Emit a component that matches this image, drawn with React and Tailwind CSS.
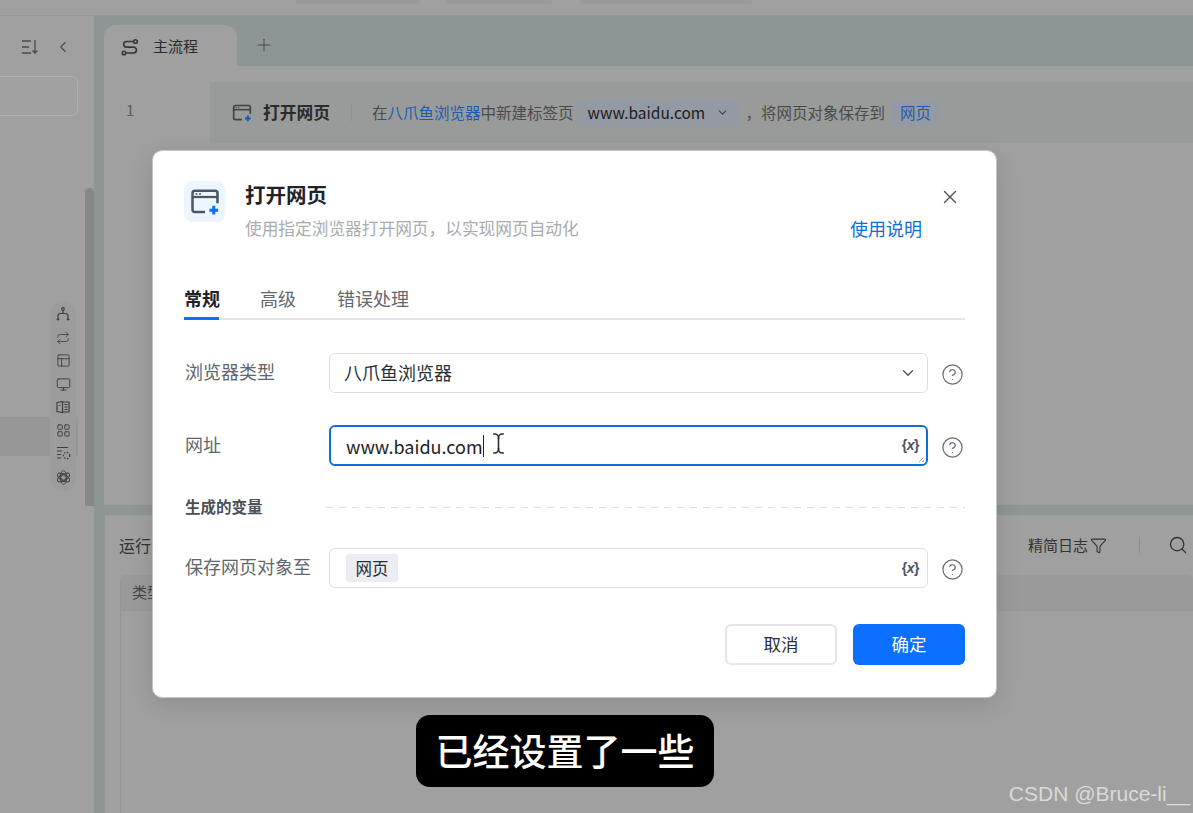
import React from 'react';
import { ChevronDown, ChevronLeft, CircleHelp, Funnel, LayoutGrid, Monitor, PanelsTopLeft, Plus, Repeat, Search, TextCursor, X } from 'lucide-react';

const font = { fontFamily: '"Noto Sans CJK SC", "Noto Sans", sans-serif' };

const BrowserPlus = ({ size = 22, plus = '#0b6fff', line = '#4b5563' }) => (
  <svg width={size} height={size} viewBox="0 0 24 24" fill="none">
    <path d="M12 20H4a2 2 0 0 1-2-2V5a2 2 0 0 1 2-2h16a2 2 0 0 1 2 2v8" stroke={line} strokeWidth="2" />
    <path d="M2 8h20" stroke={line} strokeWidth="1.8" />
    <circle cx="5.2" cy="5.6" r=".8" fill={line} />
    <circle cx="8" cy="5.6" r=".8" fill={line} />
    <path d="M19 15v7M15.5 18.500h7" stroke={plus} strokeWidth="2.400" />
  </svg>
);

const FlowIcon = () => (
  <svg width="18" height="18" viewBox="0 0 18 18" fill="none" stroke="#333636" strokeWidth="1.600">
    <circle cx="14.500" cy="3.500" r="1.800" />
    <circle cx="3" cy="15" r="1.800" />
    <path d="M12.500 3.500H5.500a2.800 2.800 0 0 0 0 5.600h7a2.800 2.800 0 0 1 0 5.900H5" />
  </svg>
);

const SortIcon = () => (
  <svg width="18" height="16" viewBox="0 0 18 16" fill="none" stroke="#4a4a4a" strokeWidth="1.300">
    <path d="M1 2h9M1 8h7M1 14h9M14 1v13M11.500 11.500 14 14l2.500-2.500" />
  </svg>
);

const BranchIcon = () => (
  <svg width="14" height="15" viewBox="0 0 14 15" fill="none" stroke="#3d3d3d" strokeWidth="1.200">
    <circle cx="7" cy="2" r="1.300" />
    <path d="M7 3.500v3M2 13V9a2.500 2.500 0 0 1 2.500-2.500h5A2.500 2.500 0 0 1 12 9v4M.8 11.800 2 13l1.200-1.200M10.800 11.800 12 13l1.200-1.200" />
  </svg>
);

const BookIcon = () => (
  <svg width="14" height="14" viewBox="0 0 14 14" fill="none" stroke="#3d3d3d" strokeWidth="1.200">
    <path d="M1 2.500 6.500 1.500v11L1 11.500zM6.500 2H13v10H6.500" />
    <path d="M8.500 4.500h3M8.500 7h3M8.500 9.500h3M3 5.500h1.500" />
  </svg>
);

const TaskIcon = () => (
  <svg width="15" height="15" viewBox="0 0 15 15" fill="none" stroke="#3d3d3d" strokeWidth="1.200">
    <path d="M1 1.500h11M1 5h5M1 8.500h4M1 12h4" />
    <circle cx="10.500" cy="9.500" r="3.200" strokeDasharray="1.600 1.400" />
  </svg>
);

const KnotIcon = () => (
  <svg width="15" height="15" viewBox="0 0 15 15" fill="none" stroke="#3d3d3d" strokeWidth=".9">
    <ellipse cx="7.500" cy="7.500" rx="6.800" ry="3.300" transform="rotate(30 7.500 7.500)" />
    <ellipse cx="7.500" cy="7.500" rx="6.800" ry="3.300" transform="rotate(90 7.500 7.500)" />
    <ellipse cx="7.500" cy="7.500" rx="6.800" ry="3.300" transform="rotate(150 7.500 7.500)" />
    <circle cx="7.500" cy="7.500" r="2.600" />
  </svg>
);

const VarMark = () => (
  <span className="text-[14px] font-bold tracking-[-0.5px] text-[#4b5563]" style={{ fontFamily: '"Liberation Sans", sans-serif' }}>
    {'{'}<span className="italic">x</span>{'}'}
  </span>
);

const Help = () => <CircleHelp size={23} strokeWidth={1.300} className="ml-[13px] mr-px mt-[3px] shrink-0 text-[#6b6f76]" />;

const Sidebar = () => (
  <div className="relative flex w-[94px] shrink-0 flex-col border-t border-[#979797]">
    <div className="flex h-[60px] items-center justify-end gap-[15px] pr-[22px] pt-[2px]">
      <SortIcon />
      <ChevronLeft size={18} strokeWidth={1.500} className="text-[#4a4a4a]" />
    </div>
    <div className="h-[40px] w-[78px] rounded-r-md border border-l-0 border-[#aeaeae]" />
    <div className="mt-[301px] h-[39px] w-[78px] bg-[#969696]" />
    <div className="absolute right-0 top-[172px] h-[318px] w-[9px] rounded-t-md bg-[#878787]" />
    {/* floating tool strip */}
    <div className="absolute left-[50px] top-[285px] flex h-[190px] w-[26px] flex-col items-center justify-between rounded-full bg-[#9c9c9c] py-[6px]">
      <BranchIcon />
      <Repeat size={14} strokeWidth={1.400} className="text-[#3d3d3d]" />
      <PanelsTopLeft size={15} strokeWidth={1.400} className="text-[#3d3d3d]" />
      <Monitor size={15} strokeWidth={1.500} className="text-[#3d3d3d]" />
      <BookIcon />
      <LayoutGrid size={15} strokeWidth={1.500} className="text-[#3d3d3d]" />
      <TaskIcon />
      <KnotIcon />
    </div>
  </div>
);

const FlowPane = () => (
  <div className="flex h-[490px] shrink-0 flex-col">
    <div className="flex h-[51px] shrink-0 items-end">
      <div className="flex h-[41px] w-[133px] items-center gap-[14px] rounded-t-[12px] bg-[#a0a0a0] pl-[17px] pt-[2px] text-[15px] text-[#2b2b2b]">
        <FlowIcon />
        <span>主流程</span>
      </div>
      <Plus size={20} strokeWidth={1.300} className="mb-[11px] ml-[17px] text-[#484c4c]" />
    </div>
    <div className="flex-1 bg-[#a0a0a0] pt-[16px]">
      <div className="flex">
        <div className="w-[106px] pl-[22px] pt-[17px] text-[15px] text-[#5c5c5c]">1</div>
        <div className="flex h-[61px] flex-1 items-center bg-[#999b9b] pl-[22px] text-[15.500px] text-[#4a4a4a]">
          <BrowserPlus size={20} plus="#1559b8" line="#3f4242" />
          <span className="ml-[11px] text-[16.750px] font-bold text-[#2b2b2b]">打开网页</span>
          <span className="ml-[21px] mr-[20px] h-[18px] w-px bg-[#929494]" />
          <span>在</span>
          <span className="text-[#1f5cb0]">八爪鱼浏览器</span>
          <span>中新建标签页</span>
          <span className="ml-[3px] flex h-[26px] w-[163px] items-center rounded bg-[#939aa3] pl-[11px] text-[#1c1c1c]">
            www.baidu.com
            <ChevronDown size={13} className="ml-[11px] text-[#444]" />
          </span>
          <span className="ml-[6px]">，将网页对象保存到</span>
          <span className="ml-[6px] flex h-[26px] items-center rounded bg-[#939aa3] px-[9px] text-[#1f5cb0]">网页</span>
        </div>
      </div>
    </div>
  </div>
);

const LogPane = () => (
  <div className="mt-[10px] flex flex-1 flex-col border-l border-[#959595] bg-[#a0a0a0]">
    <div className="flex h-[60px] shrink-0 items-center pl-[14px] text-[16px] text-[#333]">
      <span>运行日志</span>
      <span className="ml-auto text-[15px]">精简日志</span>
      <Funnel size={17} strokeWidth={1.500} className="ml-[2px] text-[#333]" />
      <span className="ml-[32px] h-[16px] w-px bg-[#8f8f8f]" />
      <Search size={20} strokeWidth={1.600} className="ml-[28px] mr-[5px] text-[#333]" />
    </div>
    <div className="ml-[15px] flex-1 rounded-t-md border-l border-[#959595]">
      <div className="flex h-[36px] items-center rounded-t-md border-b border-[#969696] bg-[#9a9a9a] pl-[11px] text-[15px] text-[#444]">类型</div>
    </div>
  </div>
);

const Field = ({ label, children, className }) => (
  <div className={`flex items-center ${className}`}>
    <span className="w-[144px] shrink-0 pb-[3px] text-[18px] text-[#62666d]">{label}</span>
    {children}
    <Help />
  </div>
);

const Modal = () => (
  <div className="absolute left-[152px] top-[150px] flex h-[548px] w-[845px] flex-col rounded-[10px] border border-[#c4c4c4] bg-white pl-[31px] pr-[31px] pt-[30px] shadow-[0_6px_24px_rgba(0,0,0,0.12)]">
    <div className="flex">
      <div className="flex h-[41px] w-[41px] shrink-0 items-center justify-center rounded-lg bg-[#edf5ff]">
        <BrowserPlus size={30} />
      </div>
      <div className="ml-[20px] flex-1">
        <div className="flex items-center justify-between">
          <h2 className="pb-[2px] text-[20.500px] font-bold leading-[26px] text-[#1f2329]">打开网页</h2>
          <X size={22} strokeWidth={1.500} className="mr-[4px] mt-[3px] text-[#4b4f55]" />
        </div>
        <div className="mt-[7px] flex items-center justify-between">
          <p className="text-[16.700px] leading-[24px] text-[#a8abb0]">使用指定浏览器打开网页，以实现网页自动化</p>
          <a href="#" className="mr-[43px] text-[18px] leading-[24px] text-[#0b6fd8]">使用说明</a>
        </div>
      </div>
    </div>

    <div className="mt-[46px] flex h-[34px] gap-[41px] border-b-2 border-[#e4e6e9] text-[18px] leading-[24px] text-[#62666d]">
      <span className="-mb-[2px] h-[34px] w-[35px] whitespace-nowrap border-b-[3px] border-[#0b6fff] font-bold text-[#1f2329]">常规</span>
      <span>高级</span>
      <span>错误处理</span>
    </div>

    <Field label="浏览器类型" className="mt-[33px] h-[40px] pl-[1px]">
      <div className="flex h-[40px] flex-1 items-center justify-between rounded-md border border-[#dcdfe4] pl-[14px] pr-[10px] text-[18px] text-[#2b2f36]">
        <span className="pb-[2px]">八爪鱼浏览器</span>
        <ChevronDown size={18} strokeWidth={1.700} className="text-[#4b4f55]" />
      </div>
    </Field>

    <Field label="网址" className="mt-[32px] h-[41px] pl-[1px]">
      <div className="relative flex h-[41px] flex-1 items-center justify-between rounded-md border-2 border-[#0b6fd8] pl-[15px] pr-[7px] text-[18px] text-[#1f2329]">
        <span className="border-r border-[#1f2329] leading-[22px]">www.baidu.com</span>
        <VarMark />
        <TextCursor size={23} strokeWidth={1.600} className="absolute left-[156px] top-[5px] text-[#2b2b2b]" />
        <span className="absolute bottom-[2px] right-[2px] h-[6px] w-[6px] bg-[linear-gradient(135deg,transparent_55%,#a8abb0_55%,#a8abb0_65%,transparent_65%,transparent_80%,#a8abb0_80%)]" />
      </div>
    </Field>

    <div className="mt-[31px] flex h-[20px] items-center pl-[1px]">
      <span className="w-[141px] shrink-0 text-[15.500px] font-bold text-[#4b4f55]">生成的变量</span>
      <span className="h-px flex-1 bg-[repeating-linear-gradient(90deg,#dcdee2_0,#dcdee2_7px,transparent_7px,transparent_13px)]" />
    </div>

    <Field label="保存网页对象至" className="mt-[31px] h-[40px] pl-[1px]">
      <div className="flex h-[40px] flex-1 items-center justify-between rounded-md border border-[#dcdfe4] pl-[16px] pr-[8px]">
        <span className="flex h-[28px] w-[52px] items-center justify-center rounded bg-[#ebedf2] text-[16.500px] text-[#2b2f36]">网页</span>
        <VarMark />
      </div>
    </Field>

    <div className="mt-[36px] flex justify-end gap-[16px]">
      <button className="h-[41px] w-[112px] rounded-md border-2 border-[#e4e6e9] text-[17.500px] text-[#2b2f36]">取消</button>
      <button className="h-[41px] w-[112px] rounded-md bg-[#0b6fff] text-[17.500px] text-white">确定</button>
    </div>
  </div>
);

export default function App() {
  return (
    <div className="relative flex h-[813px] w-[1193px] flex-col overflow-hidden bg-[#a0a0a0]" style={font}>
      {/* top bar */}
      <div className="flex h-[15px] shrink-0 items-start">
        <div className="ml-[295px] h-[4px] w-[125px] rounded-b bg-[#9a9a9a]" />
        <div className="ml-[25px] h-[4px] w-[107px] rounded-b bg-[#9a9a9a]" />
        <div className="ml-[28px] h-[4px] w-[172px] rounded-b bg-[#9a9a9a]" />
      </div>

      <div className="flex flex-1">
        <Sidebar />
        <div className="flex flex-1 flex-col bg-[#8e9695] pl-[10px]">
          <FlowPane />
          <LogPane />
        </div>
      </div>

      <Modal />

      {/* video caption */}
      <div className="absolute left-[416px] top-[715px] flex h-[72px] w-[298px] items-center justify-center rounded-[14px] bg-black text-[37px] font-medium text-white">
        已经设置了一些
      </div>
      <div className="absolute right-[3px] top-[778px] text-[21px] text-[#dadada]" style={{ fontFamily: '"Liberation Sans", sans-serif' }}>
        CSDN @Bruce-li__
      </div>
    </div>
  );
}
